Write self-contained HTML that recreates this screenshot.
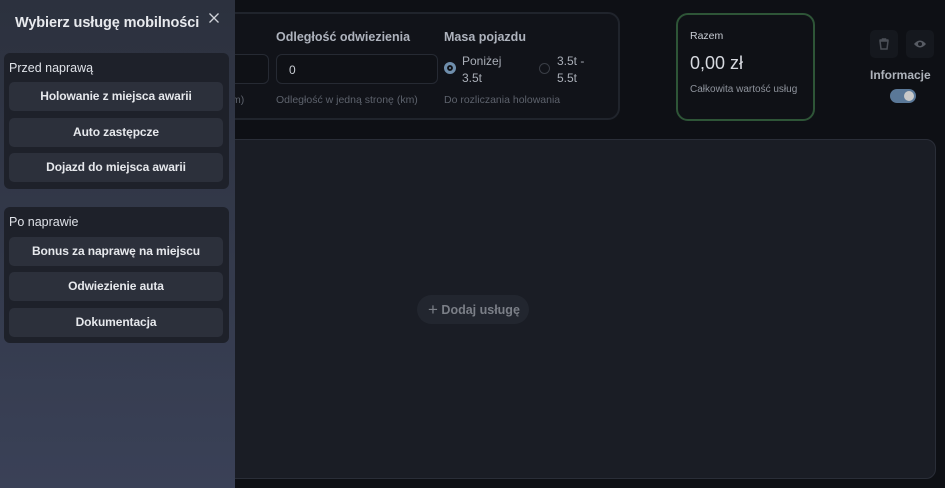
<!DOCTYPE html>
<html><head><meta charset="utf-8"><style>
*{box-sizing:border-box;margin:0;padding:0}
body{width:945px;height:488px;overflow:hidden;background:#0e1015;font-family:"Liberation Sans",sans-serif;position:relative;color:#ddd}
.abs{position:absolute}
.card{left:150px;top:12px;width:470px;height:108px;border:2px solid #20242c;border-radius:12px;background:#111319}
.lbl{font-size:12.5px;font-weight:bold;color:#aeb3bd}
.inp{border:1px solid #262a33;border-radius:6px;background:#0f1116;height:30px}
.hint{font-size:10.5px;color:#5d626c}
.sum{left:676px;top:13px;width:139px;height:108px;border:2px solid #2e5537;border-radius:12px;background:#0f1116}
.big{left:150px;top:139px;width:786px;height:340px;border:1px solid #2a2e38;border-radius:10px;background:#1a1d25}
.side{left:0;top:0;width:235px;height:488px;background:linear-gradient(#2c313e,#3a4157)}
.grp{left:4px;width:225px;background:#1e212a;border-radius:6px}
.btn{position:absolute;left:5px;width:214px;height:29px;background:#2c303b;border-radius:5px;font-size:12px;font-weight:bold;color:#e6e8ec;text-align:center;line-height:29px;letter-spacing:-0.1px}
.gl{position:absolute;left:5px;font-size:12.5px;color:#dfe2e8}
.ib{width:28px;height:28px;background:#15181e;border-radius:5px}
</style></head><body>
<div class="abs card"></div>
<div class="abs inp" style="left:200px;top:54px;width:69px"></div>
<div class="abs hint" style="left:232px;top:94px">m)</div>
<div class="abs lbl" style="left:276px;top:30px">Odległość odwiezienia</div>
<div class="abs inp" style="left:276px;top:54px;width:162px"><span style="position:absolute;left:12px;top:8px;font-size:12px;color:#c8ccd3">0</span></div>
<div class="abs hint" style="left:276px;top:94px">Odległość w jedną stronę (km)</div>
<div class="abs lbl" style="left:444px;top:30px">Masa pojazdu</div>
<div class="abs" style="left:444px;top:62px;width:12px;height:12px;border-radius:50%;background:#6f8eac;border:3px solid #6f8eac;box-shadow:inset 0 0 0 2px #0f1116"></div>
<div class="abs" style="left:462px;top:53px;font-size:12px;color:#a9aeb7;line-height:17px">Poniżej<br>3.5t</div>
<div class="abs" style="left:539px;top:63px;width:11px;height:11px;border-radius:50%;border:1px solid #3a3e46"></div>
<div class="abs" style="left:557px;top:53px;font-size:12px;color:#a9aeb7;line-height:17px">3.5t -<br>5.5t</div>
<div class="abs hint" style="left:444px;top:94px">Do rozliczania holowania</div>
<div class="abs sum"></div>
<div class="abs" style="left:690px;top:30px;font-size:10.5px;color:#c9cdd4">Razem</div>
<div class="abs" style="left:690px;top:53px;font-size:18px;color:#d6d9df">0,00 zł</div>
<div class="abs" style="left:690px;top:84px;font-size:10px;color:#8f949d">Całkowita wartość usług</div>
<div class="abs ib" style="left:870px;top:30px"><svg width="28" height="28" viewBox="0 0 28 28"><path d="M10 11h8l-1 8h-6zM9.5 10h9M12.5 10v-1h3v1" stroke="#4b4f57" stroke-width="1.5" fill="none"/></svg></div>
<div class="abs ib" style="left:906px;top:30px"><svg width="28" height="28" viewBox="0 0 28 28"><path d="M8 14q6-7 12 0q-6 7-12 0z" fill="#575b63"/><circle cx="14" cy="14" r="2" fill="#15181e"/></svg></div>
<div class="abs" style="left:870px;top:68px;font-size:12px;font-weight:bold;color:#aeb3bb">Informacje</div>
<div class="abs" style="left:890px;top:89px;width:26px;height:14px;border-radius:7px;background:#5a7898"><div style="position:absolute;right:2px;top:2px;width:10px;height:10px;border-radius:50%;background:#c9c9c9"></div></div>
<div class="abs big"></div>
<div class="abs" style="left:417px;top:295px;width:112px;height:29px;border-radius:15px;background:#22262f;color:#7b7f87;font-size:12.5px;font-weight:bold;line-height:29px;padding-left:11px"><span style="font-size:17px;font-weight:normal;vertical-align:-1px">+</span> Dodaj usługę</div>
<div class="abs side"></div>
<div class="abs" style="left:15px;top:15px;font-size:14.5px;font-weight:bold;color:#e8eaee;letter-spacing:-0.1px">Wybierz usługę mobilności</div>
<svg class="abs" style="left:208px;top:12px" width="12" height="12" viewBox="0 0 12 12"><path d="M1.5 1.5l9 9M10.5 1.5l-9 9" stroke="#d0d3d9" stroke-width="1.3"/></svg>
<div class="abs grp" style="top:53px;height:136px">
<div class="gl" style="top:8px">Przed naprawą</div>
<div class="btn" style="top:29px">Holowanie z miejsca awarii</div>
<div class="btn" style="top:65px">Auto zastępcze</div>
<div class="btn" style="top:100px">Dojazd do miejsca awarii</div>
</div>
<div class="abs grp" style="top:207px;height:136px">
<div class="gl" style="top:8px">Po naprawie</div>
<div class="btn" style="top:30px">Bonus za naprawę na miejscu</div>
<div class="btn" style="top:65px">Odwiezienie auta</div>
<div class="btn" style="top:101px">Dokumentacja</div>
</div>
</body></html>
